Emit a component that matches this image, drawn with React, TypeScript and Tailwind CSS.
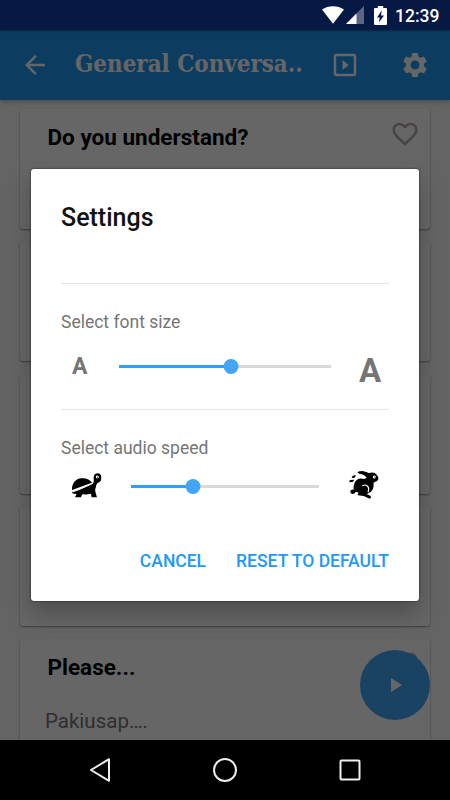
import React from "react";
import { MdArrowBack, MdFavoriteBorder, MdPlayArrow, MdSettings, MdOutlineSlideshow } from "react-icons/md";

function StatusBar() {
  return (
    <div className="relative z-20 flex h-[30px] shrink-0 items-center bg-[#061844] pl-[322px] shadow-[0_1px_2px_rgba(0,0,0,0.4)]">
      <svg width="22" height="18" viewBox="0 0 22 18" className="shrink-0">
        <path d="M0 3.6C6-1 16-1 22 3.6L11 17.8Z" fill="#fff" />
      </svg>
      <svg width="18" height="18" viewBox="0 0 18 18" className="ml-[2px] shrink-0">
        <path d="M0 18L18 0V18Z" fill="#5a6785" />
        <path d="M0 18L10.5 7.5V18Z" fill="#fff" />
      </svg>
      <svg width="13" height="19" viewBox="0 0 13 19" className="ml-[10px] shrink-0">
        <path d="M3.8 0H9.2V2H12Q13 2 13 3V18Q13 19 12 19H1Q0 19 0 18V3Q0 2 1 2H3.800Z" fill="#fff" />
        <path d="M7.700 4.500L3 11.500H5.700L4.900 16.500L10 9.500H7.100Z" fill="#061844" />
      </svg>
      <span className="ml-[8px] mt-[3px] text-[17.500px] font-medium leading-none text-white">12:39</span>
    </div>
  );
}

function Header() {
  return (
    <header className="relative z-[5] flex h-[70px] shrink-0 items-center bg-[#2196f3] pl-5 text-white shadow-[0_2px_4px_rgba(0,0,0,0.25)]">
      <MdArrowBack size={30} />
      <h1 className="ml-[25px] w-[231px] shrink-0 whitespace-nowrap">
        <span className="inline-block origin-left scale-x-[0.995] font-['DejaVu_Serif_Condensed','DejaVu_Serif',serif] text-[24px] font-bold leading-none">
          General Conversa..
        </span>
      </h1>
      <MdOutlineSlideshow size={30} className="ml-[24px] shrink-0" />
      <MdSettings size={30} className="ml-[40px] shrink-0" />
    </header>
  );
}

function PhraseCard({ title, translation }: { title?: string; translation?: string }) {
  return (
    <article className="h-[120px] shrink-0 rounded-[3px] bg-white shadow-[0_1px_2px_rgba(0,0,0,0.4)]">
      {title && (
        <div className="flex items-start justify-between pl-[27.500px] pr-[10px] pt-[10px]">
          <h2 className="pt-[4px] text-[22.500px] font-bold leading-[28px] text-black">{title}</h2>
          <MdFavoriteBorder size={30} className="text-[#b5abab]" />
        </div>
      )}
      {translation && <p className="pl-[25px] pt-[26px] text-[20.500px] leading-[28px] text-[#757575]">{translation}</p>}
    </article>
  );
}

function Slider({ value, className }: { value: number; className: string }) {
  return (
    <div className={`relative flex h-4 items-center ${className}`}>
      <div className="h-[3px] w-full bg-[#d9d9d9]">
        <div className="h-full bg-[#2f9ffa]" style={{ width: `${value}%` }} />
      </div>
      <span
        className="absolute size-[15px] -translate-x-1/2 rounded-full bg-[#42a5f5]"
        style={{ left: `${value}%` }}
      />
    </div>
  );
}

function Turtle() {
  return (
    <svg width="33.300" height="26.700" viewBox="60 35 100 80" className="-mt-[2px] shrink-0">
      <path d="M66 89C65 70 77 55 94 54C109 53 121 60 126 67Z" fill="#000" />
      <path
        d="M66 94L75 92L126 72C132 69 132 60 131 52C131 43 136 39 143 39C151 39 154 45 154 53C154 62 150 66 143 68C138 71 139 79 136 86C134 92 138 97 140 108L141 111H125L123 100C117 102 105 103 97 102L93 111H75L80 101Q70 101 66 98Z"
        fill="#000"
      />
      <path d="M64 96L87 88L122 72" fill="none" stroke="#fff" strokeWidth="3" />
      <circle cx="142" cy="50" r="4.500" fill="#fff" />
      <circle cx="142.500" cy="51" r="1.500" fill="#000" />
    </svg>
  );
}

function Hare() {
  return (
    <svg width="33.300" height="33.300" viewBox="55 25 100 100" className="shrink-0">
      <path d="M69 48L79 46L75 54L66 55ZM61 61L74 60L69 67L58 68Z" fill="#000" />
      <path
        d="M83 38Q88 34 99 34L112 38Q116 41 122 39Q135 36 141 45Q148 51 146 59Q143 67 134 68Q130 70 132 79Q132 89 124 96L116 101L111 104Q123 107 124 112Q124 118 117 116L102 109L85 107Q82 104 87 99L78 96Q76 103 68 103Q61 102 62 95Q63 89 72 90Q70 70 82 60Q91 54 104 58L111 54Q107 48 97 44Q88 44 83 38Z"
        fill="#000"
      />
      <path d="M98 79Q106 73 113 79Q120 85 115 98" fill="none" stroke="#fff" strokeWidth="3.500" />
      <circle cx="134" cy="52" r="4.500" fill="#fff" />
      <circle cx="136" cy="53" r="1.500" fill="#000" />
    </svg>
  );
}

function SettingsDialog() {
  return (
    <section
      role="dialog"
      aria-label="Settings"
      className="mt-[139px] flex h-[431.500px] w-[388px] flex-col rounded-[3px] bg-white px-[30px] shadow-[0_0_2px_rgba(0,0,0,0.8),0_12px_24px_rgba(0,0,0,0.25)]"
    >
      <h2 className="pt-[33px] text-[25px] font-medium leading-[32px] text-[#111]">Settings</h2>
      <div className="mt-[49px] border-t border-[#e6e6e6] pt-[26px]">
        <h3 className="text-[17.500px] leading-6 text-[#757575]">Select font size</h3>
        <div className="mt-[11px] flex h-[42px] items-center text-[#757575]">
          <span className="w-[58px] pl-[11px] text-[23px] font-bold leading-none">A</span>
          <Slider value={53} className="w-[212px]" />
          <span className="ml-[28px] mt-[8px] text-[33px] font-bold leading-none">A</span>
        </div>
      </div>
      <div className="mt-[22px] border-t border-[#e6e6e6] pt-[26px]">
        <h3 className="text-[17.500px] leading-6 text-[#757575]">Select audio speed</h3>
        <div className="mt-[9px] flex h-[34px] items-center pl-[9px]">
          <Turtle />
          <Slider value={33} className="ml-[28px] w-[188px]" />
          <span className="-mt-[2px] ml-[29px]">
            <Hare />
          </span>
        </div>
      </div>
      <div className="mt-[46px] flex justify-end gap-[30px] whitespace-nowrap text-[17.500px] font-medium leading-6 text-[#2199f5]">
        <button>CANCEL</button>
        <button>RESET TO DEFAULT</button>
      </div>
    </section>
  );
}

function NavigationBar() {
  return (
    <nav className="relative z-20 flex h-[60px] shrink-0 items-center justify-center gap-[101px] bg-black">
      <svg width="24" height="26" viewBox="0 0 24 26" fill="none" stroke="#eee" strokeWidth="2" strokeLinejoin="round">
        <path d="M21 2.200V23.800L3 13Z" />
      </svg>
      <svg width="24" height="26" viewBox="0 0 24 26" fill="none" stroke="#eee" strokeWidth="2">
        <circle cx="12" cy="13" r="11" />
      </svg>
      <svg width="24" height="26" viewBox="0 0 24 26" fill="none" stroke="#eee" strokeWidth="2">
        <rect x="2.500" y="3.500" width="19" height="19" rx="1" />
      </svg>
    </nav>
  );
}

export default function App() {
  return (
    <div className="relative flex h-[800px] w-[450px] flex-col overflow-hidden bg-[#fafafa] font-[Roboto,sans-serif]">
      <StatusBar />
      <Header />
      <main className="flex min-h-0 flex-1 flex-col gap-[12.400px] overflow-hidden px-5 pt-[9px]">
        <PhraseCard title="Do you understand?" />
        <PhraseCard />
        <PhraseCard />
        <PhraseCard />
        <PhraseCard title="Please..." translation="Pakiusap…." />
      </main>
      <button className="absolute left-[360px] top-[650px] flex size-[70px] items-center justify-center rounded-full bg-[#42a5f5] text-white">
        <MdPlayArrow size={24} />
      </button>
      <div className="absolute inset-x-0 bottom-[60px] top-[30px] z-10 flex items-start justify-center bg-black/60">
        <SettingsDialog />
      </div>
      <NavigationBar />
    </div>
  );
}
